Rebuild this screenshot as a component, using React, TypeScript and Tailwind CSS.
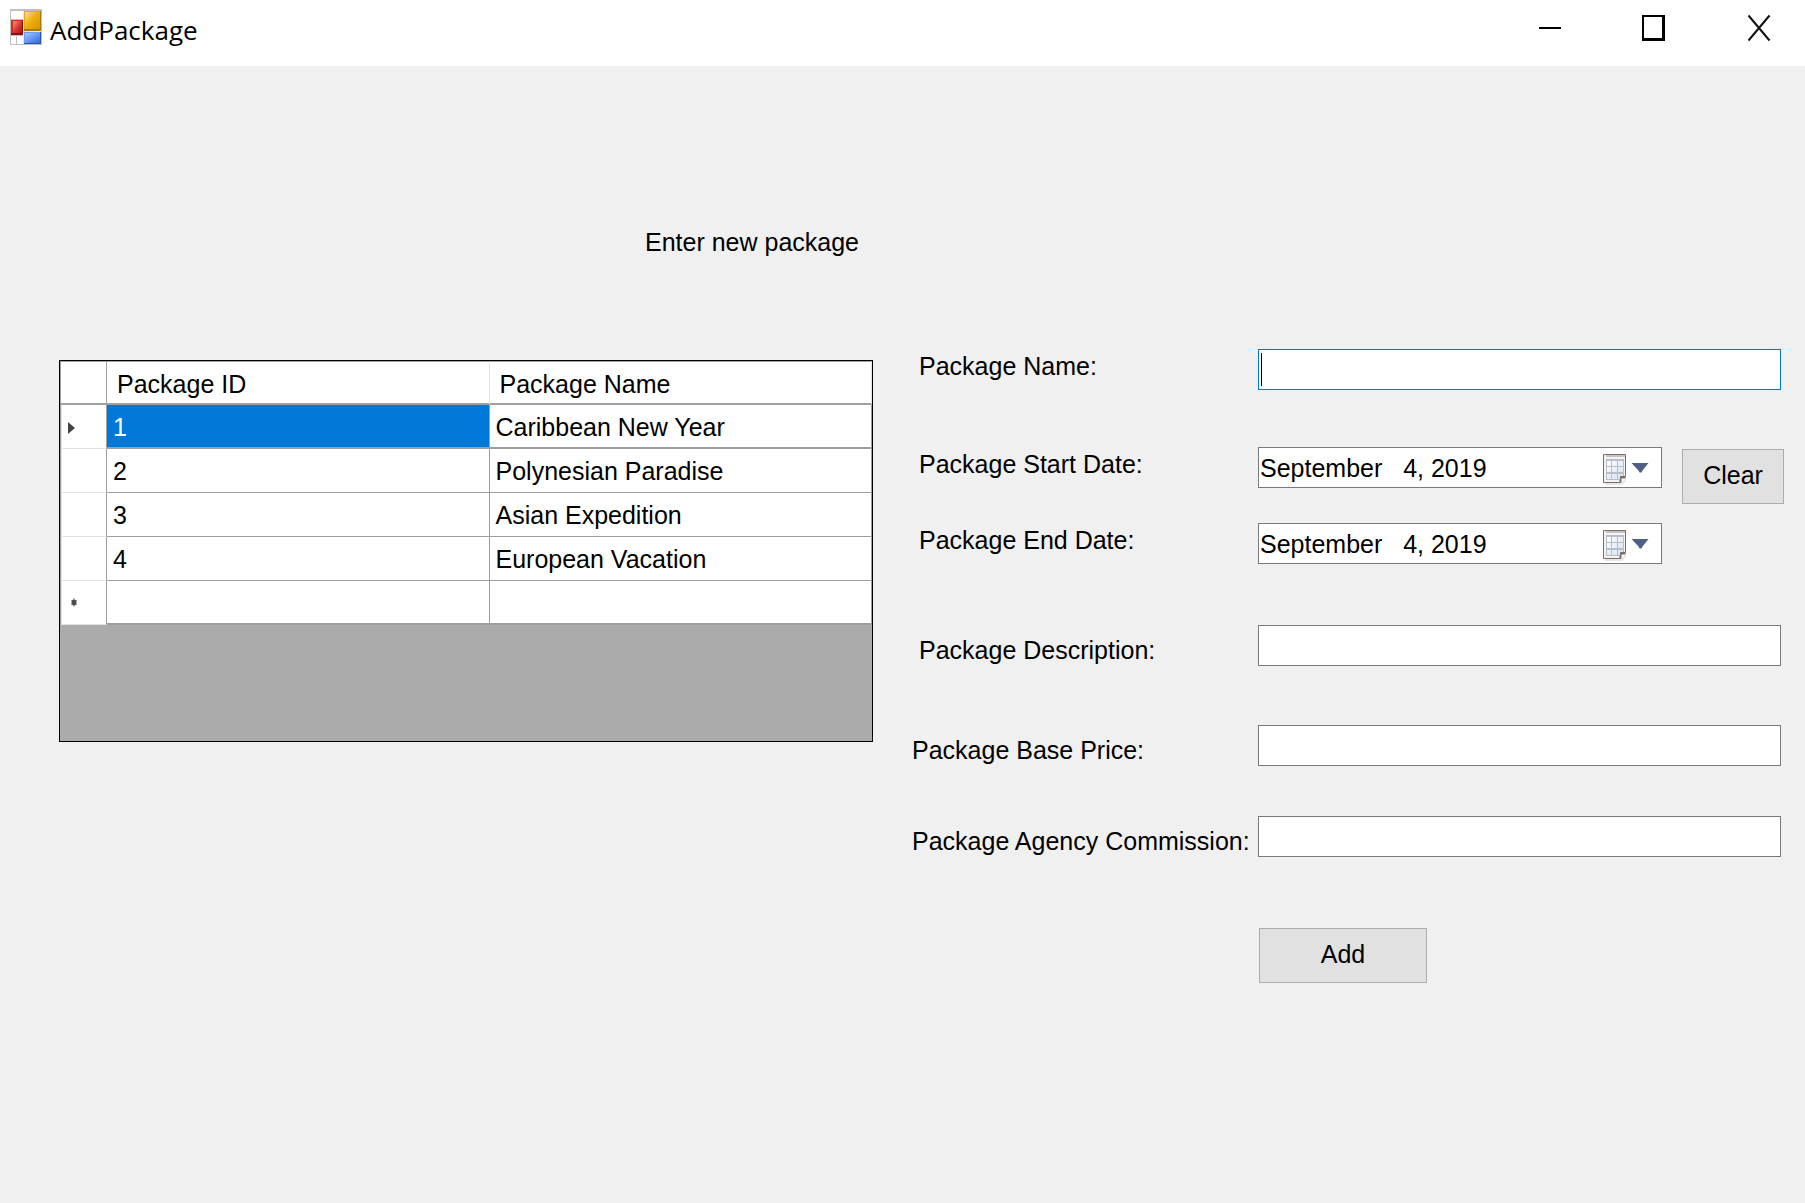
import React, { useState } from "react";

const packages = [
  { id: "1", name: "Caribbean New Year" },
  { id: "2", name: "Polynesian Paradise" },
  { id: "3", name: "Asian Expedition" },
  { id: "4", name: "European Vacation" },
];

function AppIcon() {
  return (
    <svg width="32" height="36" viewBox="0 0 32 36" className="mt-[9px] shrink-0" aria-hidden="true">
      <defs>
        <linearGradient id="gold" x1="0" y1="0" x2="1" y2="1">
          <stop offset="0" stopColor="#fbe48a" />
          <stop offset="0.45" stopColor="#eeb010" />
          <stop offset="1" stopColor="#d49500" />
        </linearGradient>
        <linearGradient id="sky" x1="0" y1="0" x2="1" y2="1">
          <stop offset="0" stopColor="#a3c8ff" />
          <stop offset="0.55" stopColor="#5f93f5" />
          <stop offset="1" stopColor="#3a6ad0" />
        </linearGradient>
        <linearGradient id="ruby" x1="0" y1="0" x2="1" y2="1">
          <stop offset="0" stopColor="#f39a86" />
          <stop offset="0.5" stopColor="#d83a30" />
          <stop offset="1" stopColor="#a81414" />
        </linearGradient>
      </defs>
      <rect width="32" height="36" fill="#c0c0c0" />
      <path d="M1 2h12v8H1zM1 27h5v8H1zM7 27h6v8H7z" fill="#fff" />
      <rect x="13" y="2" width="18" height="33" fill="#e8e8e8" />
      <rect x="14" y="2" width="17" height="20" fill="#a87800" />
      <rect x="14" y="2" width="16" height="18" fill="#e2a810" />
      <rect x="15" y="3" width="15" height="17" fill="url(#gold)" />
      <rect x="14" y="23" width="17" height="12" fill="#2c55b0" />
      <rect x="14" y="23" width="16" height="11" fill="#6a9cf4" />
      <rect x="15" y="24" width="15" height="10" fill="url(#sky)" />
      <rect x="1" y="11" width="12" height="15" fill="#8c1010" />
      <rect x="1" y="11" width="11" height="13" fill="#d43018" />
      <rect x="3" y="12" width="9" height="12" fill="url(#ruby)" />
    </svg>
  );
}

function CalendarIcon() {
  return (
    <svg width="46" height="32" viewBox="0 0 46 32" aria-hidden="true">
      <defs>
        <linearGradient id="sheet" x1="0" y1="0" x2="1" y2="1">
          <stop offset="0" stopColor="#ffffff" />
          <stop offset="1" stopColor="#d3e0f3" />
        </linearGradient>
      </defs>
      <path d="M2 29h16l5-5v3l-4 4H2z" fill="#e6e6e6" />
      <path d="M.5.5h22v22h-5v6H.5z" fill="#f4f3f3" stroke="#7b6c68" />
      <path d="M17.5 28.5v-5h5" fill="none" stroke="#7b6c68" strokeWidth="2" />
      <path d="M3 1h19v2H3z" fill="#c6c2c4" />
      <path d="M3 5h18v17h-4v4H3z" fill="#b9bec6" />
      <path d="M4 7h4v5H4zM9 7h5v5H9zM15 7h5v5h-5zM4 13h4v5H4zM9 13h5v5H9zM15 13h5v5h-5zM4 20h4v5H4zM9 20h5v5H9zM15 20h5v2h-3v3h-2z" fill="url(#sheet)" />
      <path d="M28.5 9h17l-6 7.500-1 2h-2l-1-2z" fill="#4d6185" />
    </svg>
  );
}

function TitleBar() {
  return (
    <header className="flex h-[66px] items-start bg-white pl-2.5">
      <AppIcon />
      <h1 className="mt-[14px] ml-2 font-['Open_Sans',sans-serif] text-[26px] leading-8">AddPackage</h1>
      <div className="ml-auto flex gap-[13px]">
        <button type="button" aria-label="Minimize" className="flex h-14 w-[92px] items-center justify-center">
          <svg width="24" height="28" viewBox="0 0 24 28"><path d="M2 13h22v2H2z" /></svg>
        </button>
        <button type="button" aria-label="Maximize" className="flex h-14 w-[92px] items-center justify-center">
          <svg width="24" height="28" viewBox="0 0 24 28"><path d="M0 1h23v26H0zM2 3v21h18V3z" fillRule="evenodd" /></svg>
        </button>
        <button type="button" aria-label="Close" className="flex h-14 w-[92px] items-center justify-center">
          <svg width="24" height="28" viewBox="0 0 24 28"><path d="M1.500 1.500l21 25M22.500 1.500l-21 25" stroke="#111" strokeWidth="2" fill="none" /></svg>
        </button>
      </div>
    </header>
  );
}

function RowHeader({ children }: { children?: React.ReactNode }) {
  return (
    <th scope="row" className="border-r border-b border-l border-r-[#a0a0a0] border-b-[#e3e3e3] border-l-[#e3e3e3] p-0">
      {children}
    </th>
  );
}

function PackageGrid() {
  return (
    <div className="mt-[11px] h-[382px] border border-black bg-[#ababab]">
      <table className="w-full table-fixed border-separate border-spacing-0 border-l border-[#a0a0a0] bg-white text-left">
        <colgroup>
          <col className="w-[46px]" />
          <col />
          <col />
        </colgroup>
        <thead>
          <tr className="h-11">
            <th className="border-t border-r border-b-2 border-[#a0a0a0] p-0" aria-label="Row" />
            <th scope="col" className="border-t border-r border-b-2 border-[#a0a0a0] border-r-[#e3e3e3] pt-0.5 pb-0 pl-2.5 font-normal">Package ID</th>
            <th scope="col" className="border-t border-r border-b-2 border-[#a0a0a0] border-r-[#e3e3e3] pt-0.5 pb-0 pl-2.5 font-normal">Package Name</th>
          </tr>
        </thead>
        <tbody>
          {packages.map((p, i) => (
            <tr key={p.id} className="h-11">
              <RowHeader>
                {i === 0 && (
                  <svg width="7" height="12" viewBox="0 0 7 12" className="mt-0.5 ml-1.5" aria-label="Current row">
                    <path d="M0 0l7 6-7 6z" fill="#444" />
                  </svg>
                )}
              </RowHeader>
              <td className={i === 0 ? "border-r border-b-2 border-[#a0a0a0] bg-[#0078d7] pt-0.5 pb-0 pl-1.5 text-white" : "border-r border-b border-[#a0a0a0] p-0 pl-1.5"}>{p.id}</td>
              <td className={i === 0 ? "border-r border-b-2 border-[#a0a0a0] pt-0.5 pb-0 pl-1.5" : "border-r border-b border-[#a0a0a0] p-0 pl-1.5"}>{p.name}</td>
            </tr>
          ))}
          <tr className="h-11">
            <RowHeader>
              <svg width="8" height="10" viewBox="0 0 8 10" className="ml-2" aria-label="New row">
                <path d="M4 0v9M1 2l6 5M7 2L1 7" stroke="#999" strokeWidth="1" />
                <ellipse cx="4" cy="4.500" rx="2.500" ry="3" fill="#4c4c4c" />
              </svg>
            </RowHeader>
            <td className="border-r border-b-2 border-[#a0a0a0]" />
            <td className="border-r border-b-2 border-[#a0a0a0]" />
          </tr>
        </tbody>
      </table>
    </div>
  );
}

function DatePicker({ id }: { id: string }) {
  const [value, setValue] = useState("September   4, 2019");
  return (
    <div className="flex h-[41px] min-w-0 flex-1 items-start border border-[#7a7a7a] bg-white">
      <input id={id} type="text" value={value} onChange={(e) => setValue(e.target.value)} className="h-full min-w-0 flex-1 pt-0.5 pl-px outline-none" />
      <button type="button" aria-label="Open calendar" className="mt-1.5 mr-3">
        <CalendarIcon />
      </button>
    </div>
  );
}

const box = "h-[41px] w-full border border-[#7a7a7a] bg-white px-1 outline-none";

function PackageForm() {
  return (
    <form className="col-start-2 row-start-2 flex flex-col" onSubmit={(e) => e.preventDefault()}>
      <div className="mb-[57px] flex items-start pr-[3px]">
        <label htmlFor="name" className="w-[347px] shrink-0 pt-px pl-2">Package Name:</label>
        <div className="relative flex-1">
          <input id="name" type="text" className="block h-[41px] w-full border border-[#0078d7] bg-white px-1 caret-transparent outline-none" />
          <span className="pointer-events-none absolute top-1 left-[3px] h-[33px] w-px bg-black" />
        </div>
      </div>
      <div className="mb-[19px] flex items-start">
        <label htmlFor="start" className="w-[347px] shrink-0 pt-px pl-2">Package Start Date:</label>
        <DatePicker id="start" />
        <button type="button" className="mt-0.5 ml-5 h-[55px] w-[102px] border border-[#adadad] bg-[#e1e1e1] pb-1">Clear</button>
      </div>
      <div className="mb-[61px] flex items-start pr-[122px]">
        <label htmlFor="end" className="w-[347px] shrink-0 pt-px pl-2">Package End Date:</label>
        <DatePicker id="end" />
      </div>
      <div className="mb-[59px] flex items-start pr-[3px]">
        <label htmlFor="description" className="w-[347px] shrink-0 pt-[9px] pl-2">Package Description:</label>
        <input id="description" type="text" className={box} />
      </div>
      <div className="mb-[50px] flex items-start pr-[3px]">
        <label htmlFor="price" className="w-[347px] shrink-0 pt-[9px] pl-px">Package Base Price:</label>
        <input id="price" type="text" className={box} />
      </div>
      <div className="mb-[71px] flex items-start pr-[3px]">
        <label htmlFor="commission" className="w-[347px] shrink-0 pt-[9px] pl-px">Package Agency Commission:</label>
        <input id="commission" type="text" className={box} />
      </div>
      <button type="submit" className="ml-[348px] h-[55px] w-[168px] border border-[#adadad] bg-[#e1e1e1] pb-1">Add</button>
    </form>
  );
}

export default function App() {
  return (
    <div className="min-h-screen bg-[#f0f0f0] font-['Liberation_Sans',Arial,sans-serif] text-[25px] leading-8 text-black">
      <TitleBar />
      <main className="grid grid-cols-[814fr_873fr] gap-x-[38px] gap-y-[91px] pt-40 pr-[21px] pl-[59px]">
        <h2 className="col-start-1 row-start-1 pr-3.5 text-right">Enter new package</h2>
        <div className="col-start-1 row-start-2">
          <PackageGrid />
        </div>
        <PackageForm />
      </main>
    </div>
  );
}
